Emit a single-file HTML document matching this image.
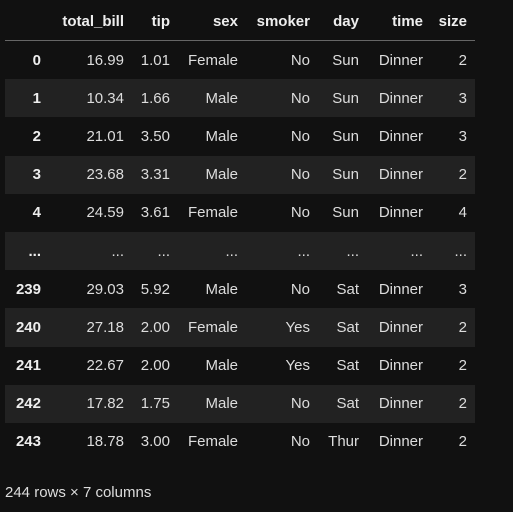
<!DOCTYPE html><html><head><style>
body{margin:0;background:#111;width:513px;height:512px;overflow:hidden;font-family:"Liberation Sans",sans-serif;font-size:15px;color:#ddd}
table{position:absolute;left:5px;top:2px;border-collapse:collapse;width:470px}
th,td{text-align:right;padding:0 8px 0 0;height:38.2px;white-space:nowrap}
thead th{height:38px;border-bottom:1px solid #666;font-weight:bold;color:#eee}
tbody th{font-weight:bold;color:#eee}
tbody tr:nth-child(even){background:#222}
.f{position:absolute;left:5px;top:484px;font-size:15px;color:#ddd}
</style></head><body>
<table><colgroup><col style="width:44px"><col style="width:83px"><col style="width:46px"><col style="width:68px"><col style="width:72px"><col style="width:49px"><col style="width:64px"><col style="width:44px"></colgroup>
<thead><tr><th></th><th>total_bill</th><th>tip</th><th>sex</th><th>smoker</th><th>day</th><th>time</th><th>size</th></tr></thead>
<tbody>
<tr><th>0</th><td>16.99</td><td>1.01</td><td>Female</td><td>No</td><td>Sun</td><td>Dinner</td><td>2</td></tr>
<tr><th>1</th><td>10.34</td><td>1.66</td><td>Male</td><td>No</td><td>Sun</td><td>Dinner</td><td>3</td></tr>
<tr><th>2</th><td>21.01</td><td>3.50</td><td>Male</td><td>No</td><td>Sun</td><td>Dinner</td><td>3</td></tr>
<tr><th>3</th><td>23.68</td><td>3.31</td><td>Male</td><td>No</td><td>Sun</td><td>Dinner</td><td>2</td></tr>
<tr><th>4</th><td>24.59</td><td>3.61</td><td>Female</td><td>No</td><td>Sun</td><td>Dinner</td><td>4</td></tr>
<tr><th>...</th><td>...</td><td>...</td><td>...</td><td>...</td><td>...</td><td>...</td><td>...</td></tr>
<tr><th>239</th><td>29.03</td><td>5.92</td><td>Male</td><td>No</td><td>Sat</td><td>Dinner</td><td>3</td></tr>
<tr><th>240</th><td>27.18</td><td>2.00</td><td>Female</td><td>Yes</td><td>Sat</td><td>Dinner</td><td>2</td></tr>
<tr><th>241</th><td>22.67</td><td>2.00</td><td>Male</td><td>Yes</td><td>Sat</td><td>Dinner</td><td>2</td></tr>
<tr><th>242</th><td>17.82</td><td>1.75</td><td>Male</td><td>No</td><td>Sat</td><td>Dinner</td><td>2</td></tr>
<tr><th>243</th><td>18.78</td><td>3.00</td><td>Female</td><td>No</td><td>Thur</td><td>Dinner</td><td>2</td></tr>
</tbody></table>
<div class="f">244 rows × 7 columns</div>
</body></html>
